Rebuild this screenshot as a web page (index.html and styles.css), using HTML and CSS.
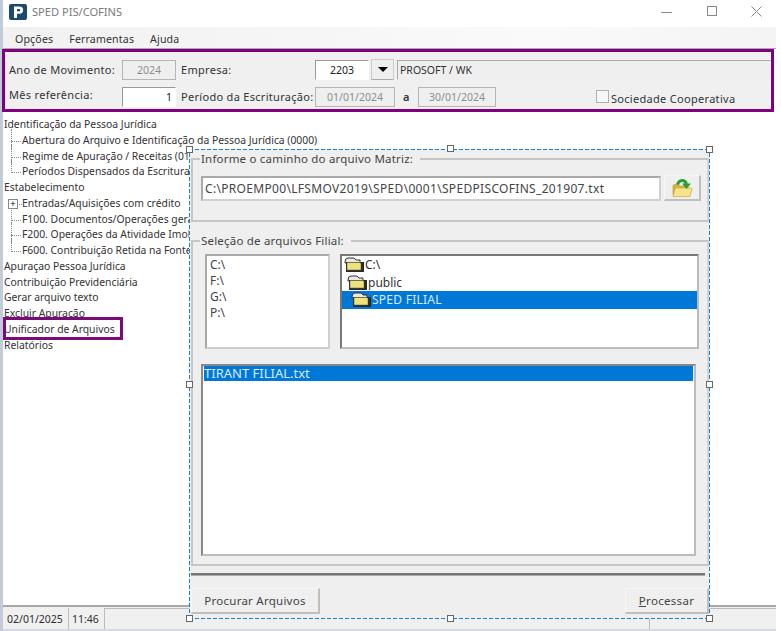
FILE: index.html
```html
<!DOCTYPE html>
<html lang="pt">
<head>
<meta charset="utf-8">
<title>SPED PIS/COFINS</title>
<link rel="stylesheet" href="styles.css">
</head>
<body>
<div class="window">
  <header class="titlebar">
    <svg class="logo" width="18" height="16" viewBox="0 0 18 16"><rect width="18" height="16" rx="2" fill="#1a4a6e"/><path d="M5 2.500h5.500a3.600 3.600 0 0 1 0 7.200H8V14H5zM8 5v2.300h2.200a1.150 1.150 0 0 0 0-2.300z" fill="#fff"/></svg>
    <span class="title">SPED PIS/COFINS</span>
    <div class="controls">
      <svg width="12" height="12" viewBox="0 0 12 12"><path d="M0 6.500h11" stroke="#8a8a8a" fill="none"/></svg>
      <svg width="12" height="12" viewBox="0 0 12 12"><rect x="1.500" y=".5" width="9" height="9" fill="none" stroke="#8a8a8a"/></svg>
      <svg width="12" height="12" viewBox="0 0 12 12"><path d="M.5 .5l10 10M10.500 .5l-10 10" stroke="#8a8a8a" fill="none"/></svg>
    </div>
  </header>
  <nav class="menubar"><span>Opções</span><span>Ferramentas</span><span>Ajuda</span></nav>
  <section class="params">
    <div class="prow">
      <label class="lab w-ano">Ano de Movimento:</label>
      <span class="field off w-54">2024</span>
      <label class="lab w-emp">Empresa:</label>
      <span class="field white w-54">2203</span>
      <span class="drop"><i></i></span>
      <span class="field name">PROSOFT / WK</span>
    </div>
    <div class="prow">
      <label class="lab w-ano raise">Mês referência:</label>
      <span class="field white w-54 right">1</span>
      <label class="lab w-emp">Período da Escrituração:</label>
      <span class="field off w-80">01/01/2024</span>
      <label class="lab w-a">a</label>
      <span class="field off w-78">30/01/2024</span>
      <span class="check"></span>
      <label class="lab coop">Sociedade Cooperativa</label>
    </div>
  </section>
  <main class="main">
    <ul class="tree">
      <li>Identificação da Pessoa Jurídica</li>
      <li class="kid">Abertura do Arquivo e Identificação da Pessoa Jurídica (0000)</li>
      <li class="kid">Regime de Apuração / Receitas (0110)</li>
      <li class="kid last">Períodos Dispensados da Escrituração</li>
      <li>Estabelecimento</li>
      <li class="kid plus">Entradas/Aquisições com crédito</li>
      <li class="kid">F100. Documentos/Operações geradoras</li>
      <li class="kid">F200. Operações da Atividade Imobiliária</li>
      <li class="kid last">F600. Contribuição Retida na Fonte</li>
      <li>Apuraçao Pessoa Jurídica</li>
      <li>Contribuição Previdenciária</li>
      <li>Gerar arquivo texto</li>
      <li>Excluir Apuração</li>
      <li class="mark">Unificador de Arquivos</li>
      <li>Relatórios</li>
    </ul>
  </main>
  <footer class="status">
    <span class="cell c-date">02/01/2025</span>
    <span class="cell c-time">11:46</span>
    <span class="cell c-wide"></span>
    <span class="cell c-end"></span>
  </footer>

  <div class="dialog">
    <fieldset class="group g1">
      <legend>Informe o caminho do arquivo Matriz:</legend>
      <div class="pathrow">
        <span class="sunken path">C:\PROEMP00\LFSMOV2019\SPED\0001\SPEDPISCOFINS_201907.txt</span>
        <button class="btn open" type="button" aria-label="Abrir">
          <svg width="22" height="20" viewBox="0 0 22 20"><path d="M2 8q0-1.500 1.500-1.500h4L9 8h8v9H2z" fill="#d9b23c" stroke="#b8902a" stroke-width=".6"/><path d="M2 18.500L4 11q.3-1 1.300-1H20q1.200 0 .9 1l-2 7.500z" fill="#f8e48a" stroke="#cfa83c" stroke-width=".7"/><path d="M6.500 6.500C8 1.500 14 1 15.500 6" fill="none" stroke="#2c9e34" stroke-width="3"/><path d="M11 5.500h9L15.500 11z" fill="#2c9e34"/></svg>
        </button>
      </div>
    </fieldset>
    <fieldset class="group g2">
      <legend>Seleção de arquivos Filial:</legend>
      <div class="lists">
        <ul class="sunken drives"><li>C:\</li><li>F:\</li><li>G:\</li><li>P:\</li></ul>
        <ul class="sunken dirs">
          <li class="d0"><svg class="folder" width="20" height="15" viewBox="0 0 20 15"><use href="#fold"/></svg>C:\</li>
          <li class="d1"><svg class="folder" width="20" height="15" viewBox="0 0 20 15"><use href="#fold"/></svg>public</li>
          <li class="d2 sel"><svg class="folder" width="20" height="15" viewBox="0 0 20 15"><use href="#fold"/></svg><span>SPED FILIAL</span></li>
        </ul>
      </div>
      <ul class="sunken files"><li class="sel">TIRANT FILIAL.txt</li></ul>
    </fieldset>
    <div class="sep"></div>
    <div class="actions">
      <button class="btn act b-find" type="button">Procurar Arquivos</button>
      <button class="btn act b-run" type="button"><u>P</u>rocessar</button>
    </div>
    <i class="h tl"></i><i class="h tm"></i><i class="h tr"></i><i class="h ml"></i><i class="h mr"></i><i class="h bl"></i><i class="h bm"></i><i class="h br"></i>
  </div>
</div>
<svg width="0" height="0" class="defs"><defs><g id="fold"><path d="M1 5q0-4 3-4h6l2 2h4v3H1z" fill="#e9e9e0" stroke="#333"/><path d="M2 15V5h18v10z" fill="#2a2a2a"/><path d="M3 13V5.500h13l1 1v6.500z" fill="#eee37a" stroke="#555" stroke-width=".5"/></g></defs></svg>
</body>
</html>
```
FILE: styles.css
```css
* , *::before, *::after { box-sizing: border-box; }
html, body { margin: 0; padding: 0; background: #fff; }
body { font-family: "Noto Sans", Tahoma, sans-serif; font-size: 12px; color: #2e2e2e; }
ul { list-style: none; margin: 0; padding: 0; }
.defs { position: absolute; }

.window { position: relative; width: 776px; height: 631px; display: flex; flex-direction: column; border-left: 3px solid #c3cbd8; background: #fff; }

.titlebar { height: 27px; display: flex; align-items: center; padding-left: 6px; flex: none; }
.logo { margin-top: -3px; }
.title { margin-left: 5px; color: #7a7a7a; font-size: 11.100px; margin-top: -5px; }
.controls { margin-left: auto; display: flex; gap: 33px; padding-right: 13px; margin-top: -4px; }

.menubar { height: 22px; flex: none; display: flex; gap: 16px; padding: 3px 0 0 12px; align-items: center; font-size: 10.600px; letter-spacing: .15px; color: #333; background: linear-gradient(90deg, #f1f1f1, #fafafa 70%, #f4f4f4); border-bottom: 1px solid #aaa; }

.params { flex: none; height: 63px; margin: 0 2px 0 -1px; border: 3px solid #800080; background: #f0f0f0; padding: 7px 0 0 4px; display: flex; flex-direction: column; gap: 6px; }
.prow { display: flex; height: 21px; align-items: center; }
.lab { white-space: nowrap; font-size: 11px; letter-spacing: .3px; color: #333; }
.w-ano { width: 113px; }
.raise { padding-bottom: 4px; }
.w-emp { width: 139px; padding-left: 5px; }
.w-a { width: 23px; padding-left: 8px; font-weight: 600; }
.field { height: 20px; line-height: 18px; text-align: center; font-size: 10.500px; border: 1px solid #b5b5b5; display: block; }
.off { color: #8d8d8d; background: #efefef; }
.white { background: #fff; border-color: #fff; border-top-color: #999; border-left-color: #999; color: #222; }
.right { text-align: right; padding-right: 3px; }
.w-54 { width: 54px; }
.w-80 { width: 80px; }
.w-78 { width: 78px; }
.drop { width: 23px; height: 21px; margin-left: 2px; background: #efefef; border: 1px solid #ccc; border-bottom-color: #aaa; display: flex; align-items: center; justify-content: center; }
.drop i { border: 5px solid transparent; border-top: 5px solid #000; border-bottom: 0; }
.name { margin-left: 3px; width: 374px; text-align: left; padding-left: 2px; background: #efefef; color: #333; border-color: #aaa #eee #eee #aaa; }
.check { width: 13px; height: 13px; background: #f7f7f7; border: 1px solid #b0b0b0; margin-left: 100px; }
.coop { margin-left: 2px; margin-top: 3px; }

.main { flex: 1; min-height: 0; border-bottom: 2px solid #a8a8a8; margin-top: 0; }
.tree { padding-top: 5px; font-size: 10.350px; line-height: 15.750px; color: #333; }
.tree li { position: relative; white-space: nowrap; padding-left: 1px; height: 15.750px; }
.tree .kid { padding-left: 19px; }
.tree .kid::before { content: ""; position: absolute; left: 8px; top: -4px; bottom: 0; border-left: 1px dotted #888; }
.tree .kid::after { content: ""; position: absolute; left: 8px; top: 8px; width: 10px; border-top: 1px dotted #888; }
.tree .last::before { bottom: 7px; }
.tree .plus::after { left: 14px; width: 5px; }
.tree .plus::before { content: "+"; left: 5px; top: 3px; bottom: auto; width: 10px; height: 10px; border: 1px solid #888; background: #fff; font: 9px/8px "Liberation Sans", sans-serif; text-align: center; color: #000; }
.mark { z-index: 1; }
.mark::after { content: ""; position: absolute; left: 0; top: -5px; width: 120px; height: 23px; border: 3px solid #7b0a7b; }

.status { flex: none; height: 24px; display: flex; gap: 2px; padding: 1px 0 0 1px; background: #f0f0f0; font-size: 10.500px; border-bottom: 2px solid #d4d9e2; }
.cell { border-left: 1px solid #bbb; line-height: 22px; padding-left: 3px; white-space: nowrap; }
.c-date { width: 62px; border-left: 0; }
.c-time { width: 34px; }
.c-wide { width: 543px; border-top: 1px solid #bbb; }
.c-end { flex: 1; border-top: 1px solid #bbb; }

.dialog { position: absolute; left: 186px; top: 149px; width: 521px; height: 470px; background: #efefef; border: 1px solid #efefef; padding: 0 0 0 1px; }
.dialog::before { content: ""; position: absolute; inset: -1px; pointer-events: none; z-index: 1;
  background:
    repeating-linear-gradient(90deg, #1283e0 0 4px, transparent 4px 6px) top / 100% 1px no-repeat,
    repeating-linear-gradient(90deg, #1283e0 0 4px, transparent 4px 6px) bottom / 100% 1px no-repeat,
    repeating-linear-gradient(0deg, #1283e0 0 4px, transparent 4px 6px) left / 1px 100% no-repeat,
    repeating-linear-gradient(0deg, #1283e0 0 4px, transparent 4px 6px) right / 1px 100% no-repeat; }
.group { margin: 0; padding: 0 0 0 8px; border: 2px solid #c6c6c6; border-right-color: #d4d4d4; width: 518px; min-width: 0; }
.group legend { padding: 0 7px 0 1px; margin-left: -1px; font-size: 11.500px; line-height: 18px; color: #444; letter-spacing: .2px; }
.g1 { height: 72px; }
.g2 { height: 334px; margin-top: 10px; }
.pathrow { display: flex; gap: 3px; padding-top: 8px; }
.sunken { display: block; background: #fff; border: 2px solid #a9a9a9; border-right-color: #d0d0d0; border-bottom-color: #d0d0d0; }
.path { width: 460px; height: 25px; line-height: 21px; padding-left: 2px; font-size: 12px; letter-spacing: .32px; color: #444; white-space: nowrap; overflow: hidden; }
.btn { font-family: inherit; color: #444; background: #efefef; border: 1px solid #f6f6f6; border-right: 2px solid #bfbfbf; border-bottom: 2px solid #bfbfbf; padding: 0; }
.open { width: 37px; height: 26px; display: flex; align-items: center; justify-content: center; margin-top: -1px; }
.lists { display: flex; gap: 10px; padding: 4px 0 0 4px; }
.drives { width: 125px; height: 95px; padding: 1px 0 0 3px; font-size: 12px; line-height: 16px; color: #444; }
.dirs { width: 359px; height: 95px; font-size: 12px; line-height: 17.500px; color: #333; border-color: #777 #bbb #bbb #777; }
.dirs li { display: flex; align-items: center; height: 17.500px; white-space: nowrap; }
.d0 { padding-left: 2px; }
.d1 { padding-left: 5px; }
.d2 { padding-left: 9px; }
.folder { flex: none; margin-right: 1px; }
.d2 span { letter-spacing: .25px; }
.sel { background: #0078d7; color: #d8ecff; }
.files { width: 495px; height: 192px; margin-top: 15px; padding: 0 1px; font-size: 13px; line-height: 15px; border-color: #888 #bbb #bbb #888; }
.sep { width: 514px; height: 3px; margin-top: 7px; background: #777; border-bottom: 1px solid #aaa; }
.actions { display: flex; justify-content: space-between; width: 518px; margin-top: 12px; }
.act { height: 26px; font-size: 11.500px; }
.b-find { width: 129px; letter-spacing: .25px; }
.b-run { width: 84px; letter-spacing: .3px; }
.h { position: absolute; z-index: 2; width: 7px; height: 7px; background: #fff; border: 1px solid #666; }
.tl { left: -4px; top: -4px; }
.tm { left: 257px; top: -5px; }
.tr { right: -4px; top: -4px; }
.ml { left: -4px; top: 231px; }
.mr { right: -4px; top: 231px; }
.bl { left: -4px; bottom: -4px; }
.bm { left: 257px; bottom: -4px; }
.br { right: -4px; bottom: -4px; }
```
